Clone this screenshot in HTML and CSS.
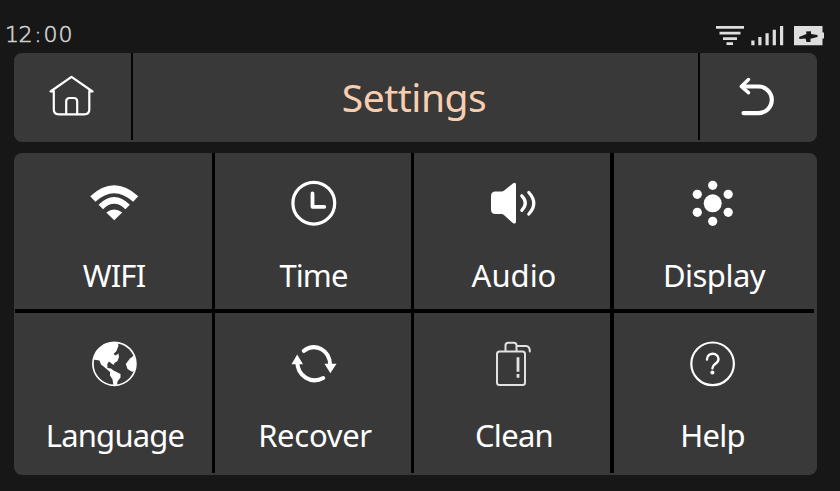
FILE: index.html
```html
<!DOCTYPE html>
<html lang="en">
<head>
<meta charset="utf-8">
<title>Settings</title>
<link rel="stylesheet" href="styles.css">
</head>
<body>
<div class="status">
  <time class="clock"><span class="one">1</span><span>2</span><span class="colon">:</span><span>0</span><span>0</span></time>
  <svg class="indicators" viewBox="712 22 116 26" aria-hidden="true">
    <g fill="#dedede">
      <path d="M716 26h28v2.800h-28zM719.500 31.800h21v2.800h-21zM723 37.200h14v2.800h-14zM726.500 42.300h6.500v2.700h-6.500z"/>
      <path d="M751.300 40.500h3.200v4.700h-3.200zM758.300 37h3.200v8.200h-3.200zM765.500 33.300h3.200v11.900h-3.200zM772.700 29.700h3.200v15.500h-3.200zM780 26h3.200v19.200h-3.200z"/>
      <path d="M794 26h28.500v6.500h1.500v6h-1.500v6.700h-28.500z"/>
    </g>
    <path fill="#171717" d="M799 37L806.500 34 806 31.500 811 31.200 811 34 817.500 35V37L810.500 38.800V42H806.500L805.500 38.500 799.500 39z"/>
  </svg>
</div>
<header class="bar">
  <div class="bar-side">
    <svg class="bar-icon" viewBox="14 53 117 88" fill="none" stroke="#fff" stroke-width="2.200" stroke-linecap="round" stroke-linejoin="round" aria-hidden="true">
      <path d="M53.500 91.500h-3L71.500 76.800 92.500 91.500h-3M53.800 91v18.500q0 4.800 5 4.800h25.500q5 0 5-4.800V91M66.200 114V101.500q0-3.500 3.500-3.500h4q3.500 0 3.500 3.500V114"/>
    </svg>
  </div>
  <h1 class="title">Settings</h1>
  <div class="bar-side">
    <svg class="bar-icon" viewBox="700 53 117 88" fill="none" stroke="#fff" stroke-width="4.200" stroke-linecap="round" stroke-linejoin="round" aria-hidden="true">
      <path d="M742.500 86.500H758.500a13.300 13.300 0 0 1 0 26.600H743.500"/><path stroke-width="3.500" d="M748.500 79.500L741.300 86.500 748.500 92.600"/>
    </svg>
  </div>
</header>
<main class="grid">
  <section class="tile">
    <svg class="icon" viewBox="15 153 197 100" fill="none" stroke="#fff" aria-hidden="true">
      <path stroke-width="7.600" d="M92.800 199Q114 179.500 135.700 199"/>
      <path stroke-width="6.400" d="M100.800 207Q114.200 193.800 127.600 207"/>
      <path fill="#fff" stroke="none" d="M106.300 212.500Q114.200 206.500 122.200 212.500L114.200 220.200z"/>
    </svg>
    <span class="label wifi">WIFI</span>
  </section>
  <section class="tile">
    <svg class="icon" viewBox="215 153 196 100" fill="none" stroke="#fff" stroke-linecap="round" stroke-linejoin="round" aria-hidden="true">
      <circle cx="313.800" cy="203.200" r="20.900" stroke-width="3.200"/>
      <path stroke-width="3.800" d="M312.500 193.500V206.800H324.300"/>
    </svg>
    <span class="label time">Time</span>
  </section>
  <section class="tile wide-line">
    <svg class="icon" viewBox="414 153 196 100" fill="none" stroke="#fff" stroke-linecap="round" stroke-linejoin="round" aria-hidden="true">
      <path fill="#fff" stroke="none" d="M495.500 191.500H501.500Q503 191.500 504.200 190.500L512.500 183.700Q516 181.500 516 185V221.500Q516 225 512.500 222.700L504.200 215.200Q503 214 501.500 214H495.500Q491 214 491 209.500V196Q491 191.500 495.500 191.500z"/>
      <path stroke-width="3.200" d="M521.800 195.800Q528.800 203 521.800 210.300"/>
      <path stroke-width="3.200" d="M528.800 192.500Q538.800 203.500 528.800 214"/>
    </svg>
    <span class="label audio">Audio</span>
  </section>
  <section class="tile">
    <svg class="icon" viewBox="614 153 200 100" fill="#fff" aria-hidden="true">
      <circle cx="712.700" cy="203.300" r="9"/><circle cx="712.700" cy="185.300" r="4.600"/><circle cx="712.700" cy="221.300" r="4.600"/>
      <circle cx="697.300" cy="194.300" r="4.600"/><circle cx="728.200" cy="194.300" r="4.600"/><circle cx="697.300" cy="212.300" r="4.600"/><circle cx="728.200" cy="212.300" r="4.600"/>
    </svg>
    <span class="label display">Display</span>
  </section>
  <section class="tile">
    <svg class="icon" viewBox="15 313 197 100" aria-hidden="true">
      <circle cx="114.400" cy="363.800" r="21.500" fill="none" stroke="#fff" stroke-width="1.700"/>
      <path fill="#fff" d="M93 359.500L96 351 104 344 112 342 117.500 342.500 118.500 345.500 116.500 351 113.500 354 115.500 355.500 118.500 353.500 119 357 117.500 361 114.500 363 113.500 365 109 361.500 107.300 364 107.500 368 111 368.500 113.500 370.500 120.500 374V377.500L117.500 381.500 117 385.500H113.500L112.500 379.500 110 375.500V372L106 368.500 101 364.500 99.500 360.500z"/>
      <path fill="#fff" d="M134 355.500L130 358.500 125.800 364 127.500 369 132 371.800 134.800 371 136 364z"/>
    </svg>
    <span class="label language">Language</span>
  </section>
  <section class="tile">
    <svg class="icon" viewBox="215 313 196 100" fill="none" stroke="#fff" stroke-width="4" stroke-linecap="round" aria-hidden="true">
      <path d="M303.800 350.800C315 342.500 330 349.500 330.200 365.500"/><path d="M323.200 378C311.500 384.500 297.300 376 297.300 362"/>
      <path fill="#fff" stroke="none" d="M324.500 363.800h12l-6.200 9.400zM291.500 364.200h11.500l-5.800-9.700z"/>
    </svg>
    <span class="label recover">Recover</span>
  </section>
  <section class="tile wide-line">
    <svg class="icon" viewBox="414 313 196 100" fill="none" stroke="#e2e2e2" stroke-width="2" stroke-linecap="round" stroke-linejoin="round" aria-hidden="true">
      <rect x="497" y="351.500" width="28" height="33.500" rx="2.500"/>
      <path d="M505.500 351v-5.500q0-2.700 2.700-2.700h5.600q2.700 0 2.700 2.700V351M516.500 346H526q3.800 0 3.800 5.500"/>
      <path stroke-width="2.800" stroke-linecap="butt" d="M518 357.300v14.500M518 374v3.800"/>
    </svg>
    <span class="label clean">Clean</span>
  </section>
  <section class="tile">
    <svg class="icon" viewBox="614 313 200 100" fill="none" stroke="#fff" stroke-linecap="round" aria-hidden="true">
      <circle cx="712.600" cy="363.800" r="21.300" stroke-width="2.200"/>
      <path stroke-width="2.400" d="M707 359.500C707 352 718.500 352 718.500 359C718.500 364 712.400 363.500 712.400 368.300"/>
      <circle cx="712.400" cy="372.600" r="2" fill="#fff" stroke="none"/>
    </svg>
    <span class="label help">Help</span>
  </section>
</main>
</body>
</html>
```
FILE: styles.css
```css
* { box-sizing: border-box; }

body {
  margin: 0;
  width: 840px;
  height: 491px;
  overflow: hidden;
  background: #171717;
  color: #fff;
  font-family: "Noto Sans", "Open Sans", sans-serif;
}

.status {
  display: flex;
  justify-content: space-between;
  height: 52px;
  padding: 22px 12px 0 5px;
}

.clock {
  display: flex;
  height: 26px;
  color: #d2d2d2;
  font: 200 22px/25px "DejaVu Sans", sans-serif;
  -webkit-text-stroke: 0.6px #d2d2d2;
}

.clock span {
  width: 15px;
  text-align: center;
}

.clock .one { width: 13px; }
.clock .colon { width: 10px; }

.indicators {
  width: 116px;
  height: 26px;
}

.bar {
  display: flex;
  width: 803px;
  height: 89px;
  margin: 0 0 0 14px;
  margin-top: 1px;
  border-radius: 8px;
  background: #393939;
}

.bar-side {
  width: 117px;
  height: 88px;
}

.bar-icon,
.icon {
  display: block;
  width: 100%;
}

.bar-icon { height: 88px; }
.icon { height: 100px; }

.title {
  flex: 1;
  height: 87px;
  margin: 0;
  padding-right: 3px;
  border: solid #050505;
  border-width: 0 2px;
  color: #f8ceb0;
  font-size: 39px;
  font-weight: 400;
  letter-spacing: -0.5px;
  line-height: 88px;
  text-align: center;
}

.grid {
  display: grid;
  grid-template-columns: 200px 199px 200px 200px;
  grid-template-rows: 160px 160px;
  width: 803px;
  height: 322px;
  margin: 11px 0 0 14px;
  padding: 0 3px 2px 1px;
  border-radius: 8px;
  background: #393939;
}

.tile {
  border: 0 solid #000;
  border-right-width: 3px;
  border-bottom-width: 4px;
}

.wide-line { border-right-width: 4px; }
.tile:nth-child(4n) { border-right-width: 0; }
.tile:nth-child(n + 5) { border-bottom-width: 0; }

.label {
  display: block;
  height: 46px;
  font-size: 31px;
  line-height: 44px;
  text-align: center;
  white-space: nowrap;
}

.wifi { letter-spacing: -0.8px; padding-left: 1px; }
.time { letter-spacing: -0.9px; padding-left: 1px; }
.audio { padding-left: 4px; }
.display { letter-spacing: -0.5px; }
.language { letter-spacing: -0.8px; padding-left: 3px; }
.recover { letter-spacing: -0.3px; padding-left: 4px; }
.clean { letter-spacing: -0.7px; padding-left: 4px; }
.help { letter-spacing: -0.7px; padding-right: 3px; }
```
